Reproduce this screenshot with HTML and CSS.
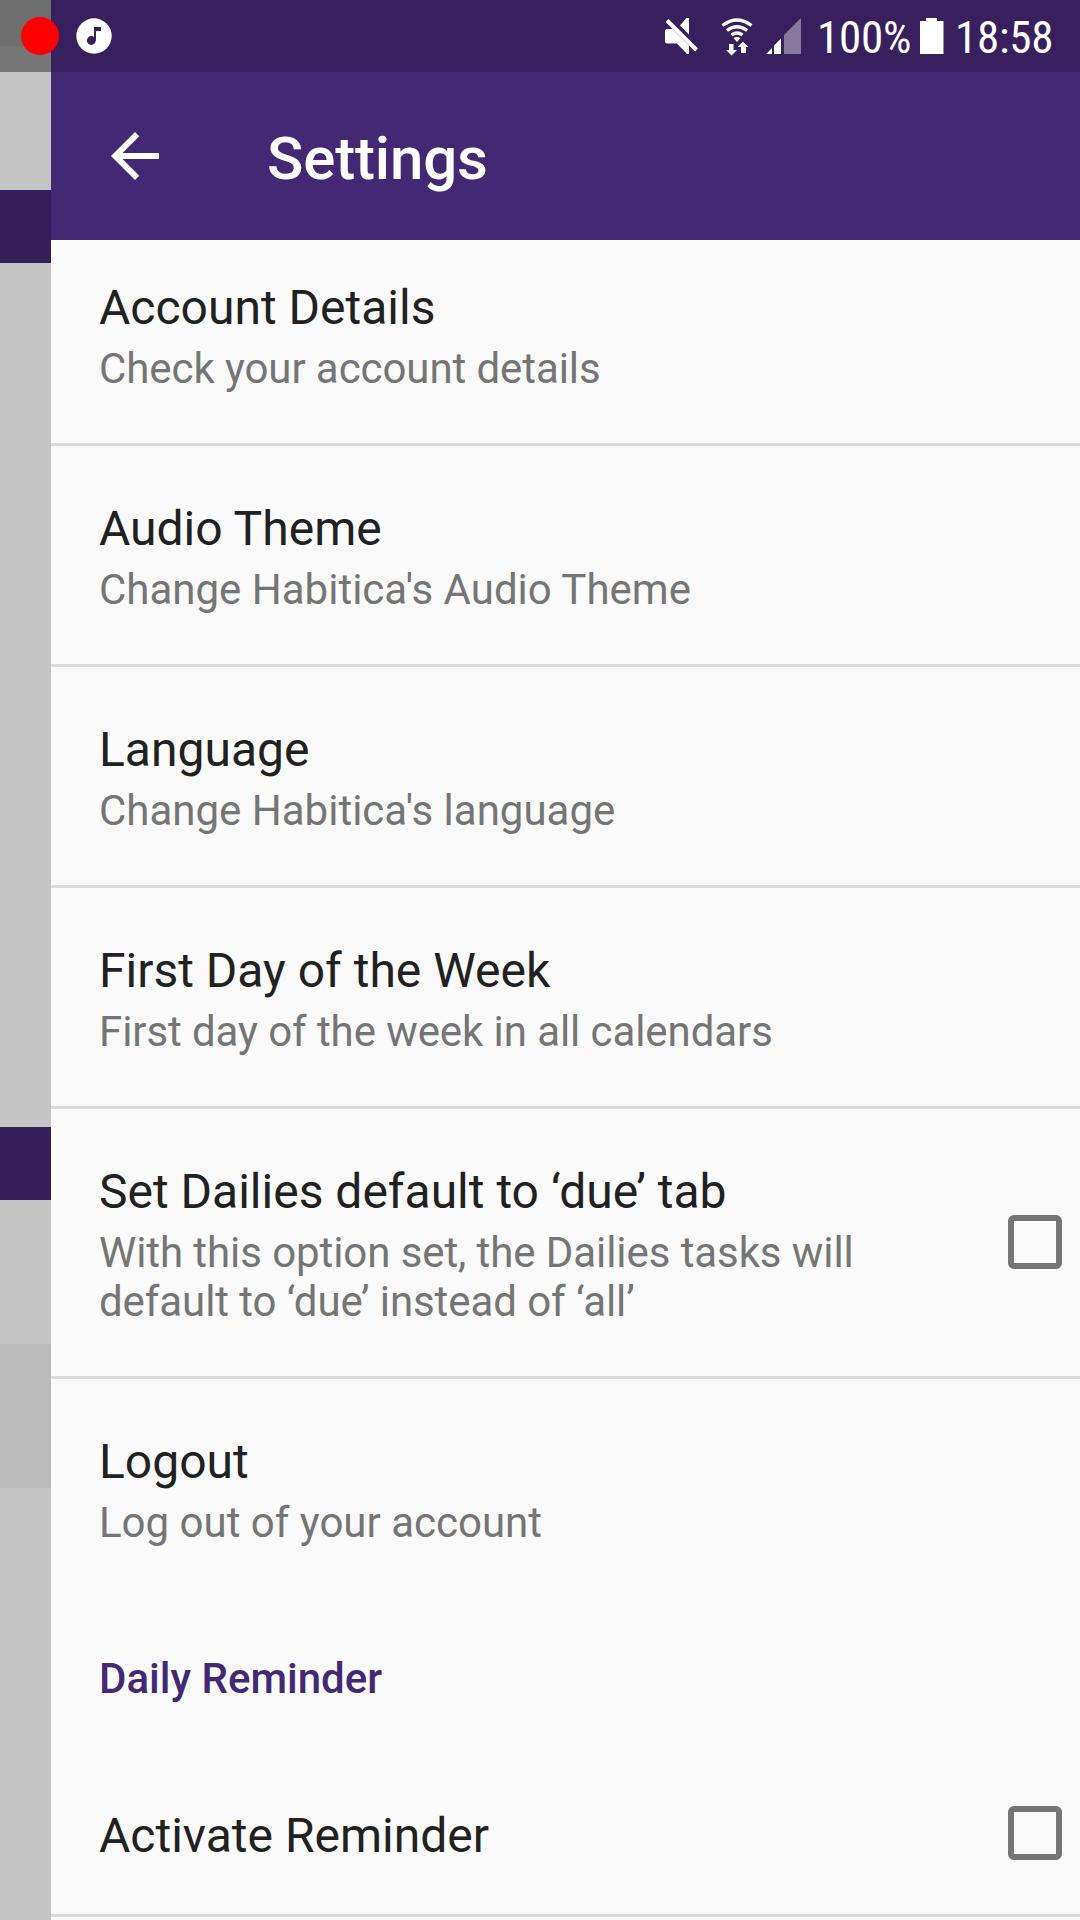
FILE: index.html
```html
<!DOCTYPE html>
<html lang="en">
<head>
<meta charset="utf-8">
<title>Settings</title>
<link rel="stylesheet" href="styles.css">
</head>
<body>
<div class="screen">
  <aside class="edge">
    <div class="band band-status"></div>
    <div class="band band-status-low"></div>
    <div class="band band-top"></div>
    <div class="band band-accent"></div>
    <div class="band band-long"></div>
    <div class="band band-accent"></div>
    <div class="band band-item"></div>
    <div class="band band-selected"></div>
    <div class="band band-rest"></div>
  </aside>
  <main class="panel">
    <div class="status">
      <svg class="music" width="36" height="36" viewBox="0 0 36 36"><circle cx="18" cy="18" r="17.7" fill="#fff"/><circle cx="15.3" cy="22.5" r="4.4" fill="#37205d"/><path d="M18 9h7v4h-5v9.500h-2z" fill="#37205d"/></svg>
      <svg class="mute" width="36" height="38" viewBox="0 0 36 38" fill="#fff"><path d="M1 13q0-2 2-2h5.500L25 27.500V36h-2L13 25.500H3q-2 0-2-2zM16 7.500L22.500 0H25v16.500z"/><path d="M3 2.500L32.500 32" stroke="#fff" stroke-width="4"/></svg>
      <svg class="wifi" width="34" height="38" viewBox="0 0 34 38" fill="none" stroke="#fff" stroke-width="3.200"><path d="M2.500 7.500q14.500-11 29 0M7 12.500q10-7.500 20 0M11.500 17q5.500-4 11 0"/><path d="M17 24l-3.500-4q3.500-2 7 0zM9 26h4.500v6H17l-5.500 5.500L6 32h3zM21 35v-6h-3.500L23 23.500l5.500 5.500H26v6z" fill="#fff" stroke="none"/></svg>
      <svg class="signal" width="38" height="38" viewBox="0 0 38 38" fill="#fff"><path d="M1 36l6-6v6zM9 27.500l7-7V36H9z"/><path d="M19 17L36 0v36H19z" opacity=".4"/></svg>
      <span class="label battery-label">100%</span>
      <svg class="battery" width="24" height="36" viewBox="0 0 24 36"><path d="M6 0h11v3h6.500v33H0V3h6z" fill="#fff"/></svg>
      <span class="label clock">18:58</span>
    </div>
    <header class="toolbar">
      <svg width="72" height="72" viewBox="0 0 24 24"><path fill="#fff" d="M20 11H7.830l5.590-5.590L12 4l-8 8 8 8 1.410-1.410L7.830 13H20z"/></svg>
      <h1>Settings</h1>
    </header>
    <section class="list">
      <div class="row row-first"><div class="text"><h2>Account Details</h2><p class="snug">Check your account details</p></div></div>
      <div class="row"><div class="text"><h2>Audio Theme</h2><p>Change Habitica's Audio Theme</p></div></div>
      <div class="row"><div class="text"><h2>Language</h2><p>Change Habitica's language</p></div></div>
      <div class="row"><div class="text"><h2>First Day of the Week</h2><p class="snug">First day of the week in all calendars</p></div></div>
      <div class="row row-tall"><div class="text"><h2>Set Dailies default to ‘due’ tab</h2><p class="snug">With this option set, the Dailies tasks will<br>default to ‘due’ instead of ‘all’</p></div><span class="box"></span></div>
      <div class="row row-last"><div class="text"><h2>Logout</h2><p>Log out of your account</p></div></div>
      <h3>Daily Reminder</h3>
      <div class="row row-single"><div class="text"><h2>Activate Reminder</h2></div><span class="box"></span></div>
    </section>
  </main>
  <span class="record"></span>
</div>
</body>
</html>
```

FILE: styles.css
```css
* { box-sizing: border-box; }
body { margin: 0; font-family: Roboto, sans-serif; }
h1, h2, h3, p { margin: 0; font-weight: 400; white-space: nowrap; }
svg { display: block; flex: none; }
.screen { position: relative; display: flex; width: 1080px; height: 1920px; overflow: hidden; background: #fafafa; }
.edge { width: 51px; flex: none; background: #c4c4c4; }
.band-status { height: 46px; background: #6e6e6e; }
.band-status-low { height: 26px; background: #767676; }
.band-top { height: 118px; }
.band-accent { height: 73px; background: #351f5a; }
.band-long { height: 864px; }
.band-item { height: 144px; }
.band-selected { height: 144px; background: #bababa; }
.panel { flex: 1; min-width: 0; }
.status { display: flex; align-items: flex-start; height: 72px; padding: 18px 0 0 25px; background: #37205d; color: #fff; }
.mute { margin-left: 552px; }
.wifi { margin-left: 20px; }
.signal { margin-left: 11px; }
.label { font-size: 45px; line-height: 46px; font-stretch: 75%; font-family: "Roboto Condensed", Roboto, sans-serif; white-space: nowrap; margin-top: -3px; }
.battery-label { width: 103px; margin-left: 14px; letter-spacing: -0.2px; }
.clock { margin-left: 11px; letter-spacing: -0.2px; }
.toolbar { display: flex; align-items: center; height: 168px; padding-left: 48px; background: #432874; color: #fff; }
.toolbar h1 { margin-left: 96px; padding-top: 5px; font-size: 60px; line-height: 72px; font-weight: 500; letter-spacing: -0.15px; }
.row { display: flex; justify-content: space-between; height: 221px; padding: 55px 18px 0 48px; border-bottom: 3px solid #dbdbdb; }
.row h2 { font-size: 48px; line-height: 56px; color: #212121; }
.row p { margin-top: 8px; font-size: 42px; line-height: 49px; color: #757575; }
.row p.snug { letter-spacing: -0.08px; }
.row-first { height: 206px; padding-top: 40px; }
.row-tall { height: 270px; }
.row-last { height: 218px; border: 0; }
.list h3 { height: 163px; padding: 57px 0 0 48px; font-size: 42px; line-height: 49px; font-weight: 500; color: #432874; }
.row-single { height: 157px; padding-top: 48px; }
.box { width: 54px; height: 54px; border: 6px solid #757575; border-radius: 6px; flex: none; margin-top: 51px; }
.row-single .box { margin-top: -2px; }
.record { position: absolute; left: 21px; top: 17px; width: 38px; height: 38px; border-radius: 50%; background: #f00; }
```
